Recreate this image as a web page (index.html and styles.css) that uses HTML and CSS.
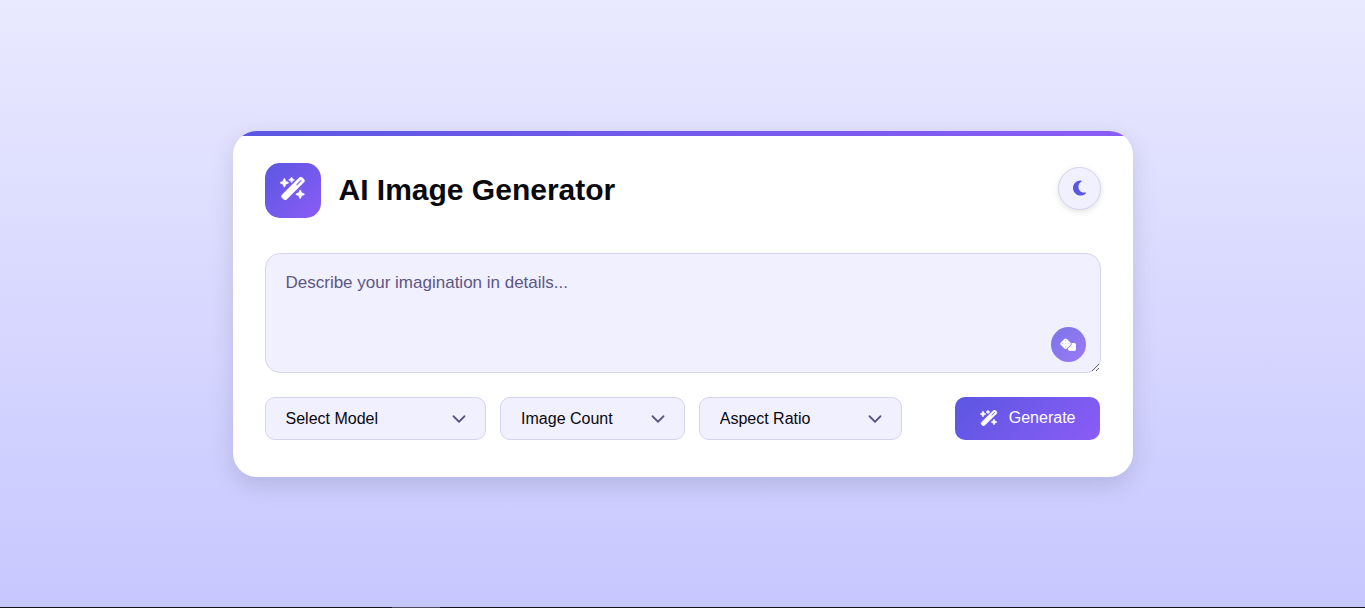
FILE: index.html
```html
<!DOCTYPE html>
<html lang="en">
<head>
<meta charset="UTF-8">
<meta name="viewport" content="width=device-width, initial-scale=1">
<title>AI Image Generator</title>
<link rel="stylesheet" href="styles.css">
</head>
<body>
<svg class="sprite" aria-hidden="true">
  <symbol id="wand" viewBox="0 0 576 512"><path d="M234.700 42.700L197 56.800c-3 1.100-5 4-5 7.200s2 6.100 5 7.200l37.700 14.100L248.800 123c1.100 3 4 5 7.200 5s6.100-2 7.200-5l14.100-37.700L315 71.200c3-1.100 5-4 5-7.200s-2-6.100-5-7.200L277.300 42.700 263.200 5c-1.100-3-4-5-7.200-5s-6.100 2-7.200 5L234.700 42.700zM46.100 395.400c-18.700 18.700-18.700 49.100 0 67.900l34.600 34.600c18.700 18.700 49.100 18.700 67.900 0L529.900 116.500c18.700-18.700 18.700-49.100 0-67.900L495.300 14.100c-18.700-18.700-49.100-18.700-67.900 0L46.100 395.400zM484.600 82.600l-105 105-23.300-23.300 105-105 23.300 23.300zM7.500 117.200C3 118.900 0 123.200 0 128s3 9.100 7.500 10.800L64 160l21.200 56.500c1.700 4.500 6 7.500 10.800 7.500s9.100-3 10.800-7.500L128 160l56.500-21.200c4.500-1.700 7.500-6 7.500-10.800s-3-9.100-7.500-10.800L128 96 106.800 39.500C105.100 35 100.800 32 96 32s-9.100 3-10.800 7.500L64 96 7.500 117.200zm352 256c-4.500 1.700-7.500 6-7.500 10.800s3 9.100 7.500 10.800L416 416l21.200 56.500c1.700 4.500 6 7.500 10.800 7.500s9.100-3 10.800-7.500L480 416l56.500-21.200c4.500-1.700 7.500-6 7.500-10.800s-3-9.100-7.500-10.800L480 352l-21.200-56.500c-1.700-4.500-6-7.500-10.800-7.500s-9.100 3-10.800 7.500L416 352l-56.500 21.200z" stroke="currentColor" stroke-width="12" stroke-linejoin="round"/></symbol>
  <symbol id="chevron" viewBox="0 0 24 24"><path d="M6 9l6 6 6-6" fill="none" stroke="currentColor" stroke-width="2" stroke-linecap="round" stroke-linejoin="round"/></symbol>
</svg>
<main class="card">
  <header class="header">
    <div class="brand">
      <span class="logo"><svg class="logo-icon" aria-hidden="true"><use href="#wand"/></svg></span>
      <h1 class="title">AI Image Generator</h1>
    </div>
    <button class="theme-toggle" type="button" aria-label="Toggle theme">
      <svg class="moon-icon" viewBox="0 0 384 512" aria-hidden="true"><path d="M223.500 32C100 32 0 132.300 0 256S100 480 223.500 480c60.600 0 115.500-24.200 155.800-63.400c5-4.900 6.300-12.500 3.100-18.700s-10.100-9.700-17-8.500c-9.800 1.700-19.800 2.600-30.100 2.600c-96.900 0-175.500-78.800-175.500-176c0-65.800 36-123.100 89.300-153.300c6.100-3.500 9.200-10.500 7.700-17.300s-7.300-11.900-14.300-12.500c-6.300-.5-12.600-.8-19-.8z"/></svg>
    </button>
  </header>
  <form class="form">
    <div class="prompt">
      <textarea class="prompt-input" aria-label="Image prompt" placeholder="Describe your imagination in details..."></textarea>
      <button class="dice-button" type="button" aria-label="Random prompt">
        <svg class="dice-icon" viewBox="0 0 640 512" aria-hidden="true"><path fill-rule="evenodd" d="M274.900 34.300c-28.100-28.100-73.700-28.100-101.800 0L34.300 173.100c-28.100 28.100-28.100 73.700 0 101.800L173.100 413.700c28.100 28.100 73.700 28.100 101.800 0L413.700 274.900c28.100-28.100 28.100-73.700 0-101.800L274.900 34.300zM208 224a16 16 0 1 1 32 0 16 16 0 1 1-32 0zM96 208a16 16 0 1 1 0 32 16 16 0 1 1 0-32zM224 368a16 16 0 1 1 0-32 16 16 0 1 1 0 32zM352 208a16 16 0 1 1 0 32 16 16 0 1 1 0-32zM224 112a16 16 0 1 1 0-32 16 16 0 1 1 0 32z"/><path fill-rule="evenodd" d="M320 448c0 35.300 28.700 64 64 64h192c35.300 0 64-28.700 64-64V256c0-35.300-28.700-64-64-64H461.700c11.600 36 3.100 77-25.400 105.500L320 413.800V448zM480 336a16 16 0 1 1 0 32 16 16 0 1 1 0-32z"/></svg>
      </button>
    </div>
    <div class="actions">
      <div class="field">
        <select class="select" aria-label="Model"><option>Select Model</option></select>
        <svg class="chevron" aria-hidden="true"><use href="#chevron"/></svg>
      </div>
      <div class="field">
        <select class="select" aria-label="Image count"><option>Image Count</option></select>
        <svg class="chevron" aria-hidden="true"><use href="#chevron"/></svg>
      </div>
      <div class="field">
        <select class="select" aria-label="Aspect ratio"><option>Aspect Ratio</option></select>
        <svg class="chevron" aria-hidden="true"><use href="#chevron"/></svg>
      </div>
      <button class="generate" type="submit"><svg class="generate-icon" aria-hidden="true"><use href="#wand"/></svg>Generate</button>
    </div>
  </form>
</main>
</body>
</html>
```
FILE: styles.css
```css
* {
  box-sizing: border-box;
  margin: 0;
  padding: 0;
}

body {
  display: flex;
  align-items: center;
  justify-content: center;
  min-height: 100vh;
  padding: 15px;
  border-bottom: 1px solid #12121c;
  border-image: linear-gradient(90deg, #12121c 392px, #4a4a58 392px 440px, #12121c 440px) 1;
  background: linear-gradient(#e9e9ff, #c7c7ff);
  color: #09090e;
  font-family: "Liberation Sans", Arial, sans-serif;
}

button,
select,
textarea {
  color: inherit;
  font: inherit;
}

svg {
  fill: currentColor;
}

.sprite {
  position: absolute;
  width: 0;
  height: 0;
}

.card {
  position: relative;
  width: 100%;
  max-width: 900px;
  padding: 32px 32px 37px;
  overflow: hidden;
  border-radius: 24px;
  background: #fff;
  box-shadow: 0 8px 24px rgba(0, 0, 0, 0.12);
}

.card::before {
  content: "";
  position: absolute;
  inset: 0 0 auto;
  height: 5px;
  background: linear-gradient(135deg, #5b57e2, #8b5cf6);
}

.header,
.brand {
  display: flex;
  align-items: center;
}

.header {
  justify-content: space-between;
  margin-bottom: 35px;
}

.brand {
  gap: 18px;
}

.logo {
  display: grid;
  place-items: center;
  width: 56px;
  height: 55px;
  padding-bottom: 3px;
  border-radius: 15px;
  background: linear-gradient(135deg, #5b57e2, #8b5cf6);
  color: #fff;
}

.logo-icon {
  width: 26px;
  height: 23px;
}

.title {
  font-size: 30px;
  font-weight: 700;
}

.theme-toggle {
  display: grid;
  place-items: center;
  width: 43px;
  height: 43px;
  margin-bottom: 4px;
  border: 1px solid #d5d3ee;
  border-radius: 50%;
  background: #f1f0ff;
  box-shadow: 0 2px 6px rgba(0, 0, 0, 0.12);
  color: #5b57e2;
}

.moon-icon {
  width: 13px;
  height: 18px;
}

.prompt {
  position: relative;
}

.prompt-input {
  display: block;
  width: 100%;
  height: 120px;
  padding: 16px 20px;
  border: 1px solid #d5d3ee;
  border-radius: 15px;
  background: #f1f0ff;
  font-size: 17px;
  line-height: 26px;
  resize: vertical;
}

.prompt-input::placeholder {
  color: #5c5783;
}

.dice-button {
  position: absolute;
  right: 15px;
  bottom: 11px;
  display: grid;
  place-items: center;
  width: 35px;
  height: 35px;
  border: 0;
  border-radius: 50%;
  background: linear-gradient(135deg, #5b57e2, #8b5cf6);
  color: #fff;
  opacity: 0.8;
}

.dice-icon {
  width: 16px;
  height: 13px;
}

.actions {
  display: grid;
  grid-template-columns: 1.2fr 1fr 1.1fr 1fr;
  gap: 14px;
  margin-top: 24px;
}

.field {
  position: relative;
}

.select {
  display: block;
  width: 100%;
  height: 43px;
  padding: 0 20px;
  border: 1px solid #d5d3ee;
  border-radius: 10px;
  appearance: none;
  background: #f1f0ff;
  font-size: 16px;
}

.chevron {
  position: absolute;
  top: 11px;
  right: 16px;
  width: 22px;
  height: 22px;
  color: #5c5783;
  pointer-events: none;
}

.generate {
  display: flex;
  align-items: center;
  justify-content: center;
  justify-self: end;
  gap: 11px;
  height: 43px;
  padding: 0 25px 1px;
  border: 0;
  border-radius: 10px;
  background: linear-gradient(135deg, #5b57e2, #8b5cf6);
  color: #fff;
  font-size: 16px;
}

.generate-icon {
  width: 18px;
  height: 16px;
}

@media (max-width: 760px) {
  .actions {
    grid-template-columns: 1fr;
  }

  .generate {
    justify-self: stretch;
  }
}
```
